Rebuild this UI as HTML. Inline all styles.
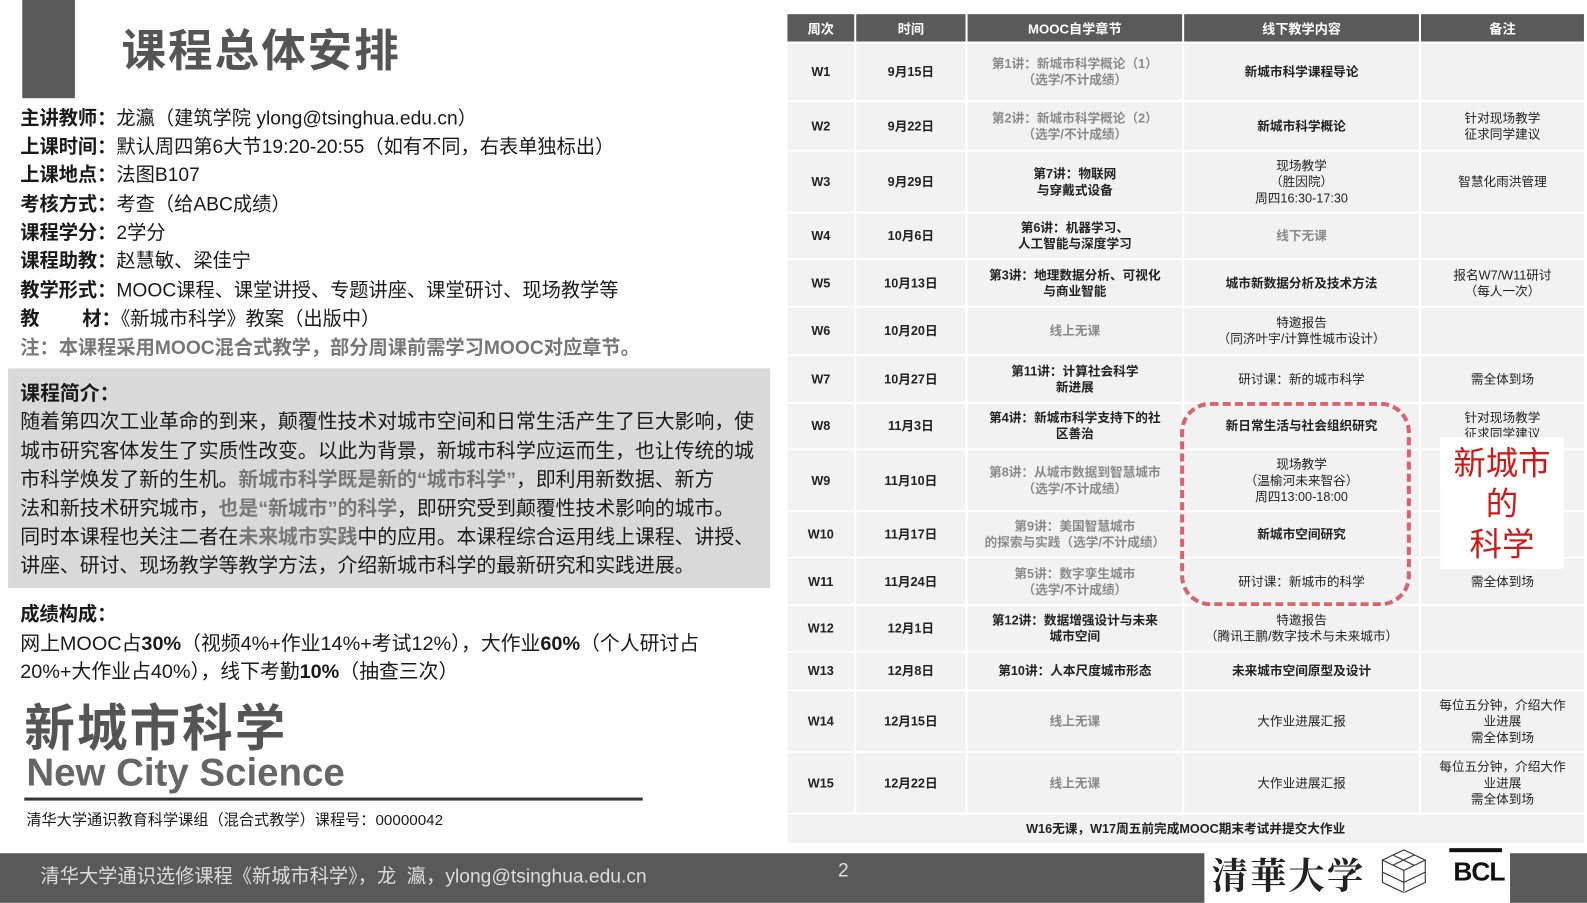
<!DOCTYPE html>
<html><head><meta charset="utf-8"><style>
*{margin:0;padding:0;box-sizing:border-box}
body{width:1587px;height:892px;background:#fff;position:relative;overflow:hidden;font-family:"Liberation Sans","Noto Sans CJK SC",sans-serif;color:#1a1a1a}
#w{position:absolute;left:0;top:0;width:1568px;height:882px;transform:scale(1.0121);transform-origin:0 0}
.a{position:absolute}
.info{left:20px;font-size:19px;white-space:nowrap;line-height:28px}
.info b{font-weight:bold}
table{position:absolute;left:776px;top:12px;border-collapse:separate;border-spacing:2px;width:791px;table-layout:fixed}
td{background:#f2f2f2;text-align:center;font-size:12.5px;font-weight:bold;line-height:16px;color:#222}
th{background:#5a5a5a;color:#fff;font-size:13px;height:27px;font-weight:bold}
.g{color:#8a8a8a}
.n{font-weight:normal}
.p{white-space:nowrap}
</style></head><body><div id="w">
<div class="a" style="left:22px;top:0;width:52px;height:97px;background:#595959"></div>
<div class="a" style="left:120px;top:14px;font-size:44px;font-weight:bold;color:#555;letter-spacing:2px">课程总体安排</div>
<div class="a info" style="top:104px"><b>主讲教师：</b>龙瀛（建筑学院 ylong@tsinghua.edu.cn）</div>
<div class="a info" style="top:132px"><b>上课时间：</b>默认周四第6大节19:20-20:55（如有不同，右表单独标出）</div>
<div class="a info" style="top:160px"><b>上课地点：</b>法图B107</div>
<div class="a info" style="top:189px"><b>考核方式：</b>考查（给ABC成绩）</div>
<div class="a info" style="top:217px"><b>课程学分：</b>2学分</div>
<div class="a info" style="top:245px"><b>课程助教：</b>赵慧敏、梁佳宁</div>
<div class="a info" style="top:274px"><b>教学形式：</b>MOOC课程、课堂讲授、专题讲座、课堂研讨、现场教学等</div>
<div class="a info" style="top:302px"><b>教&nbsp;&nbsp;&nbsp;&nbsp;&nbsp;&nbsp;&nbsp;&nbsp;材：</b>《新城市科学》教案（出版中）</div>
<div class="a info" style="top:331px;color:#777;font-weight:bold">注：本课程采用MOOC混合式教学，部分周课前需学习MOOC对应章节。</div>
<div class="a" style="left:8px;top:364px;width:753px;height:217px;background:#d9d9d9"></div>
<div class="a p" style="left:20px;top:375px;font-size:19.6px;line-height:28.4px">
<b>课程简介：</b><br>随着第四次工业革命的到来，颠覆性技术对城市空间和日常生活产生了巨大影响，使<br>城市研究客体发生了实质性改变。以此为背景，新城市科学应运而生，也让传统的城<br>市科学焕发了新的生机。<b style="color:#777">新城市科学既是新的“城市科学”</b>，即利用新数据、新方<br>法和新技术研究城市，<b style="color:#777">也是“新城市”的科学</b>，即研究受到颠覆性技术影响的城市。<br>同时本课程也关注二者在<b style="color:#777">未来城市实践</b>中的应用。本课程综合运用线上课程、讲授、<br>讲座、研讨、现场教学等教学方法，介绍新城市科学的最新研究和实践进展。</div>
<div class="a" style="left:20px;top:592px;font-size:19px;font-weight:bold">成绩构成：</div>
<div class="a p" style="left:20px;top:622px;font-size:19.6px;line-height:28.4px">网上MOOC占<b>30%</b>（视频4%+作业14%+考试12%），大作业<b>60%</b>（个人研讨占<br>20%+大作业占40%），线下考勤<b>10%</b>（抽查三次）</div>
<div class="a" style="left:24px;top:680px;font-size:50px;font-weight:bold;color:#555;letter-spacing:2px">新城市科学</div>
<div class="a" style="left:26px;top:743px;font-size:38px;font-weight:bold;color:#666">New City Science</div>
<div class="a" style="left:24px;top:788px;width:611px;height:3px;background:#333"></div>
<div class="a" style="left:26px;top:799px;font-size:15px">清华大学通识教育科学课组（混合式教学）课程号：00000042</div>

<table>
<colgroup><col style="width:66px"><col style="width:108px"><col style="width:212px"><col style="width:232px"><col></colgroup>
<tr><th>周次</th><th>时间</th><th>MOOC自学章节</th><th>线下教学内容</th><th>备注</th></tr>
<tr style="height:56px"><td>W1</td><td>9月15日</td><td class="g">第1讲：新城市科学概论（1）<br>（选学/不计成绩）</td><td>新城市科学课程导论</td><td></td></tr>
<tr style="height:47px"><td>W2</td><td>9月22日</td><td class="g">第2讲：新城市科学概论（2）<br>（选学/不计成绩）</td><td>新城市科学概论</td><td class="n">针对现场教学<br>征求同学建议</td></tr>
<tr style="height:59px"><td>W3</td><td>9月29日</td><td>第7讲：物联网<br>与穿戴式设备</td><td class="n">现场教学<br>（胜因院）<br>周四16:30-17:30</td><td class="n">智慧化雨洪管理</td></tr>
<tr style="height:44px"><td>W4</td><td>10月6日</td><td>第6讲：机器学习、<br>人工智能与深度学习</td><td class="g">线下无课</td><td></td></tr>
<tr style="height:45px"><td>W5</td><td>10月13日</td><td>第3讲：地理数据分析、可视化<br>与商业智能</td><td>城市新数据分析及技术方法</td><td class="n">报名W7/W11研讨<br>（每人一次）</td></tr>
<tr style="height:46px"><td>W6</td><td>10月20日</td><td class="g">线上无课</td><td class="n">特邀报告<br>（同济叶宇/计算性城市设计）</td><td></td></tr>
<tr style="height:45px"><td>W7</td><td>10月27日</td><td>第11讲：计算社会科学<br>新进展</td><td class="n">研讨课：新的城市科学</td><td class="n">需全体到场</td></tr>
<tr style="height:44px"><td>W8</td><td>11月3日</td><td>第4讲：新城市科学支持下的社<br>区善治</td><td>新日常生活与社会组织研究</td><td class="n">针对现场教学<br>征求同学建议</td></tr>
<tr style="height:59px"><td>W9</td><td>11月10日</td><td class="g">第8讲：从城市数据到智慧城市<br>（选学/不计成绩）</td><td class="n">现场教学<br>（温榆河未来智谷）<br>周四13:00-18:00</td><td></td></tr>
<tr style="height:44px"><td>W10</td><td>11月17日</td><td class="g">第9讲：美国智慧城市<br>的探索与实践（选学/不计成绩）</td><td>新城市空间研究</td><td></td></tr>
<tr style="height:45px"><td>W11</td><td>11月24日</td><td class="g">第5讲：数字孪生城市<br>（选学/不计成绩）</td><td class="n">研讨课：新城市的科学</td><td class="n">需全体到场</td></tr>
<tr style="height:44px"><td>W12</td><td>12月1日</td><td>第12讲：数据增强设计与未来<br>城市空间</td><td class="n">特邀报告<br>（腾讯王鹏/数字技术与未来城市）</td><td></td></tr>
<tr style="height:36px"><td>W13</td><td>12月8日</td><td>第10讲：人本尺度城市形态</td><td>未来城市空间原型及设计</td><td></td></tr>
<tr style="height:59px"><td>W14</td><td>12月15日</td><td class="g">线上无课</td><td class="n">大作业进展汇报</td><td class="n">每位五分钟，介绍大作<br>业进展<br>需全体到场</td></tr>
<tr style="height:59px"><td>W15</td><td>12月22日</td><td class="g">线上无课</td><td class="n">大作业进展汇报</td><td class="n">每位五分钟，介绍大作<br>业进展<br>需全体到场</td></tr>
<tr style="height:28px"><td colspan="5">W16无课，W17周五前完成MOOC期末考试并提交大作业</td></tr>
</table>
<div class="a" style="left:1166px;top:397px;width:228px;height:202px;border:4px dashed #d9646b;border-radius:30px"></div>
<div class="a" style="left:1423px;top:432px;width:122px;height:130px;background:#fff;color:#d01818;font-size:32px;line-height:40px;text-align:center;padding-top:6px">新城市<br>的<br>科学</div>

<div class="a" style="left:0;top:843px;width:1190px;height:49px;background:#595959"></div>
<div class="a" style="left:40px;top:851px;font-size:19px;color:#ddd">清华大学通识选修课程《新城市科学》，龙&nbsp;&nbsp;瀛，ylong@tsinghua.edu.cn</div>
<div class="a" style="left:828px;top:850px;font-size:19px;color:#ddd">2</div>
<div class="a" style="left:1197px;top:838px;font-size:36px;font-family:'Noto Serif CJK SC',serif;font-weight:bold;color:#222;letter-spacing:2px">清華大学</div>
<svg class="a" style="left:1360px;top:838px" width="55" height="44" viewBox="0 0 55 52" fill="none" stroke="#333" stroke-width="1.3"><path d="M27 2 L52 14 L27 26 L2 14 Z M2 14 V40 L27 52 L52 40 V14 M14 8 L39 20 M39 8 L14 20 M27 26 V50 M2 28 L27 40 L52 28"/></svg>
<div class="a" style="left:1432px;top:838px;width:52px;height:4px;background:#111"></div>
<div class="a" style="left:1436px;top:846px;font-size:26px;font-weight:bold;color:#111;letter-spacing:-1px">BCL</div>
<div class="a" style="left:1492px;top:843px;width:95px;height:49px;background:#595959"></div>
</div></body></html>
